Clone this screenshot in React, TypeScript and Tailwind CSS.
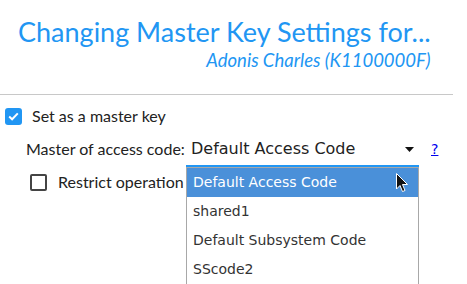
import React from 'react';

const items = ['Default Access Code', 'shared1', 'Default Subsystem Code', 'SScode2'];

const App: React.FC = () => {
  return (
    <div className="relative w-[467px] h-[284px] overflow-hidden bg-white" style={{ fontFamily: 'Lato, "Noto Sans", sans-serif' }}>
      <div className="w-[453px] border-b border-[#c8c8c8] pt-[14px] pb-[23px]">
        <div className="ml-[18px] w-fit">
          <h1 className="text-[27px] leading-[36px] text-[#2196f3] whitespace-nowrap">Changing Master Key Settings for...</h1>
          <div className="text-right text-[18.5px] leading-[21px] italic text-[#2196f3]">Adonis Charles (K1100000F)</div>
        </div>
      </div>

      <div className="pt-[11px]">
        <label className="flex items-center gap-[10px] pl-[5px] h-[18px] mt-[1px]">
          <span className="w-[17px] h-[17px] rounded-[3px] bg-[#2196f3] flex items-center justify-center">
            <svg width="11" height="9" viewBox="0 0 11 9">
              <path d="M1.2 4.6 L4.1 7.3 L9.8 1.4" fill="none" stroke="white" strokeWidth="2" />
            </svg>
          </span>
          <span className="text-[16px] text-[#222]">Set as a master key</span>
        </label>

        <div className="flex items-center pl-[26px] mt-[14px] h-[20px]">
          <span className="text-[16px] text-[#222] w-[165px]">Master of access code:</span>
          <span className="text-[16px] text-[#222] w-[214px]" style={{ fontFamily: '"DejaVu Sans", sans-serif' }}>Default Access Code</span>
          <svg width="9" height="5" viewBox="0 0 9 5" className="mt-[1px]">
            <path d="M0 0 L9 0 L4.5 5 Z" fill="#111" />
          </svg>
          <a className="ml-[17px] text-[14px] text-[#0000ee] underline" style={{ fontFamily: '"DejaVu Sans", sans-serif' }}>?</a>
        </div>

        <label className="flex items-center gap-[11px] pl-[30px] mt-[14px] h-[18px]">
          <span className="w-[17px] h-[17px] rounded-[2px] border-2 border-[#444]" />
          <span className="text-[16px] text-[#222]">Restrict operation</span>
        </label>
      </div>

      <div className="absolute left-[186px] top-[165px] w-[233px] h-[130px] border-t-2 border-[#2196f3] bg-white">
        <div className="h-full border-x border-t border-[#a8a8a8]" style={{ fontFamily: '"DejaVu Sans", sans-serif' }}>
          {items.map((it, i) => (
            <div
              key={it}
              className={`h-[29px] flex items-center pl-[6px] text-[14px] ${i === 0 ? 'bg-[#4a90d9] text-white' : 'text-[#333]'}`}
            >
              {it}
            </div>
          ))}
        </div>
      </div>

      <svg className="absolute left-[396px] top-[173px]" width="13" height="20" viewBox="0 0 13 20">
        <path d="M0.5 0.5 L0.5 16 L4 12.5 L6.5 18.5 L9 17.5 L6.5 11.5 L11.5 11.5 Z" fill="#111" stroke="white" strokeWidth="1" />
      </svg>
    </div>
  );
};

export default App;
